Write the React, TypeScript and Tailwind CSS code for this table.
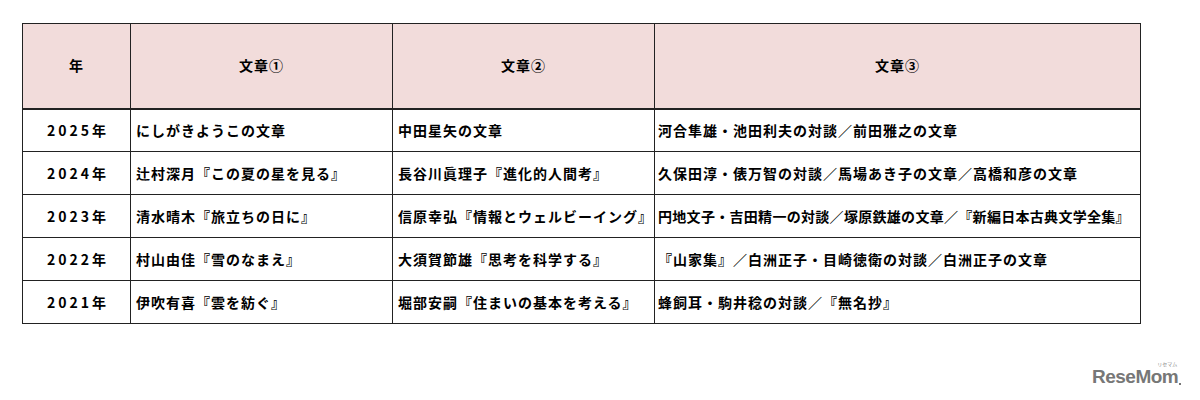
const rows = [
  {
    year: "2025年",
    a: "にしがきようこの文章",
    b: "中田星矢の文章",
    c: "河合隼雄・池田利夫の対談／前田雅之の文章",
  },
  {
    year: "2024年",
    a: "辻村深月『この夏の星を見る』",
    b: "長谷川眞理子『進化的人間考』",
    c: "久保田淳・俵万智の対談／馬場あき子の文章／高橋和彦の文章",
  },
  {
    year: "2023年",
    a: "清水晴木『旅立ちの日に』",
    b: "信原幸弘『情報とウェルビーイング』",
    c: "円地文子・吉田精一の対談／塚原鉄雄の文章／『新編日本古典文学全集』",
    tight: true,
  },
  {
    year: "2022年",
    a: "村山由佳『雪のなまえ』",
    b: "大須賀節雄『思考を科学する』",
    c: "『山家集』／白洲正子・目崎徳衛の対談／白洲正子の文章",
  },
  {
    year: "2021年",
    a: "伊吹有喜『雲を紡ぐ』",
    b: "堀部安嗣『住まいの基本を考える』",
    c: "蜂飼耳・駒井稔の対談／『無名抄』",
  },
];

const App = () => {
  return (
    <div className="relative w-[1200px] h-[400px] bg-white font-['Noto_Sans_CJK_JP',sans-serif] text-[#000]">
      <div className="pt-[23px] pl-[22px]">
        <table className="w-[1119px] table-fixed border-collapse text-[14px] font-bold tracking-[1px]">
          <colgroup>
            <col className="w-[108px]" />
            <col className="w-[262px]" />
            <col className="w-[262px]" />
            <col />
          </colgroup>
          <thead>
            <tr className="h-[85px] bg-[#f2dcdb]">
              <th className="border border-[#222] border-b-2 text-center">年</th>
              <th className="border border-[#222] border-b-2 text-center">文章①</th>
              <th className="border border-[#222] border-b-2 text-center">文章②</th>
              <th className="border border-[#222] border-b-2 text-center">文章③</th>
            </tr>
          </thead>
          <tbody>
            {rows.map((r) => (
              <tr key={r.year} className="h-[43px]">
                <td className="border border-[#222] text-center tracking-[3px] pl-[3px]">{r.year}</td>
                <td className="border border-[#222] pl-[5px] whitespace-nowrap">{r.a}</td>
                <td className="border border-[#222] pl-[5px] whitespace-nowrap">{r.b}</td>
                <td
                  className={
                    r.tight
                      ? "border border-[#222] pl-[3px] whitespace-nowrap tracking-[0.3px]"
                      : "border border-[#222] pl-[3px] whitespace-nowrap"
                  }
                >
                  {r.c}
                </td>
              </tr>
            ))}
          </tbody>
        </table>
      </div>

      {/* logo */}
      <div className="absolute left-[1092px] top-[367px] flex items-end">
        <span className="font-['Liberation_Sans',sans-serif] font-bold text-[19px] leading-none tracking-[-0.5px] text-[#777]">
          ReseMom
        </span>
        <span className="mb-[1px] ml-[1px] w-[2px] h-[2px] bg-[#777]" />
        <span className="absolute right-[4px] -top-[6px] text-[5px] leading-none text-[#888]">リセマム</span>
      </div>
    </div>
  );
};

export default App;
